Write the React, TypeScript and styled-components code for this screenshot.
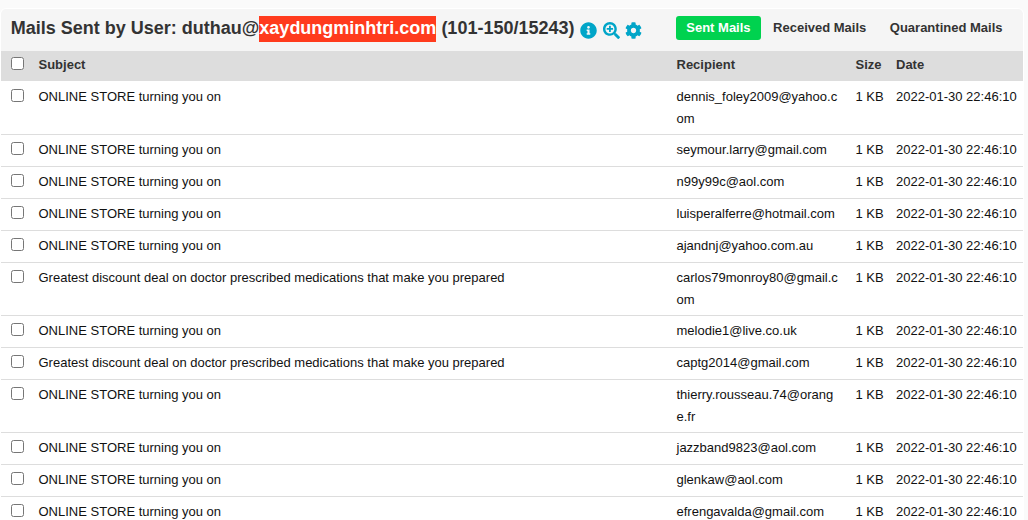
import React from "react";
import styled, { createGlobalStyle } from "styled-components";
import { FaInfoCircle, FaSearchPlus, FaCog } from "react-icons/fa";

const Global = createGlobalStyle`
  html, body { margin: 0; padding: 0; background: #fafafa; }
  body { font-family: "Liberation Sans", Arial, sans-serif; font-size: 13px; color: #111; height: 520px; overflow: hidden; }
`;

const Panel = styled.section`
  margin: 8px 4px 0 0;
  border: 1px solid #fff;
  background: #fff;
  border-radius: 6px 6px 0 0;
  overflow: hidden;
`;

const Toolbar = styled.header`
  height: 42px;
  box-sizing: border-box;
  background: #f5f5f5;
  display: flex;
  align-items: flex-start;
  justify-content: space-between;
  padding: 7px 8.75px 0 9.75px;
`;

const TitleGroup = styled.div`
  display: flex;
  align-items: flex-start;
`;

const Title = styled.h1`
  margin: 0;
  font-size: 18px;
  line-height: 24px;
  font-weight: 700;
  color: #333;
  white-space: nowrap;
`;

const Domain = styled.span`
  display: inline-block;
  padding-bottom: 2px;
  background: #ff3b1d;
  color: #fff;
`;

const Icons = styled.div`
  display: flex;
  align-items: center;
  gap: 5.5px;
  margin-left: 5.75px;
  margin-top: 6px;
  color: #00a5c8;
  svg { width: 17px; height: 17px; display: block; }
`;

const Tabs = styled.nav`
  display: flex;
  align-items: center;
`;

const Tab = styled.button<{ $active?: boolean }>`
  height: 24px;
  padding: 0 ${(p) => (p.$active ? "10.5px" : "11.75px")} 1px;
  margin-right: ${(p) => (p.$active ? "0.25px" : "0")};
  border: 0;
  border-radius: 3px;
  font: 700 13px "Liberation Sans", Arial, sans-serif;
  background: ${(p) => (p.$active ? "#00d24f" : "transparent")};
  color: ${(p) => (p.$active ? "#fff" : "#333")};
`;

const Table = styled.table`
  width: 100%;
  table-layout: fixed;
  border-collapse: separate;
  border-spacing: 0;
`;

const Head = styled.thead`
  background: #ddd;
`;

const Th = styled.th`
  height: 30px;
  padding: 0 7.5px;
  box-sizing: border-box;
  text-align: left;
  font-weight: 700;
  color: #333;
  line-height: 27px;
  vertical-align: top;
`;

const Row = styled.tr`
  height: 32px;
  & > td { border-top: 1px solid #ddd; }
  &:first-child > td { border-top-color: #fff; }
`;

const Td = styled.td`
  padding: 4px 7.5px 4px;
  line-height: 22px;
  vertical-align: top;
  word-break: break-all;
`;

const CheckCell = styled.td`
  padding: 7px 0 4px 10px;
  vertical-align: top;
`;

const CheckHead = styled.th`
  padding: 6px 0 0 10px;
  text-align: left;
  vertical-align: top;
`;

const Check = styled.input.attrs({ type: "checkbox" })`
  display: block;
  margin: 0;
  width: 13px;
  height: 13px;
`;

const Stamp = styled(Td)`
  white-space: nowrap;
`;

const online = "ONLINE STORE turning you on";
const deal = "Greatest discount deal on doctor prescribed medications that make you prepared";

const rows: [string, string][] = [
  [online, "dennis_foley2009@yahoo.com"],
  [online, "seymour.larry@gmail.com"],
  [online, "n99y99c@aol.com"],
  [online, "luisperalferre@hotmail.com"],
  [online, "ajandnj@yahoo.com.au"],
  [deal, "carlos79monroy80@gmail.com"],
  [online, "melodie1@live.co.uk"],
  [deal, "captg2014@gmail.com"],
  [online, "thierry.rousseau.74@orange.fr"],
  [online, "jazzband9823@aol.com"],
  [online, "glenkaw@aol.com"],
  [online, "efrengavalda@gmail.com"],
];

export default function App() {
  return (
    <>
      <Global />
      <Panel>
        <Toolbar>
          <TitleGroup>
            <Title>
              Mails Sent by User: duthau@<Domain>xaydungminhtri.com</Domain> (101-150/15243)
            </Title>
            <Icons>
              <FaInfoCircle />
              <FaSearchPlus />
              <FaCog />
            </Icons>
          </TitleGroup>
          <Tabs>
            <Tab $active>Sent Mails</Tab>
            <Tab>Received Mails</Tab>
            <Tab>Quarantined Mails</Tab>
          </Tabs>
        </Toolbar>
        <Table>
          <colgroup>
            <col style={{ width: 30 }} />
            <col style={{ width: 638 }} />
            <col style={{ width: 179 }} />
            <col style={{ width: 40.5 }} />
            <col />
          </colgroup>
          <Head>
            <tr>
              <CheckHead><Check /></CheckHead>
              <Th>Subject</Th>
              <Th>Recipient</Th>
              <Th>Size</Th>
              <Th>Date</Th>
            </tr>
          </Head>
          <tbody>
            {rows.map(([subject, to], i) => (
              <Row key={i}>
                <CheckCell><Check /></CheckCell>
                <Td>{subject}</Td>
                <Td>{to}</Td>
                <Stamp>1 KB</Stamp>
                <Stamp>2022-01-30 22:46:10</Stamp>
              </Row>
            ))}
          </tbody>
        </Table>
      </Panel>
    </>
  );
}
